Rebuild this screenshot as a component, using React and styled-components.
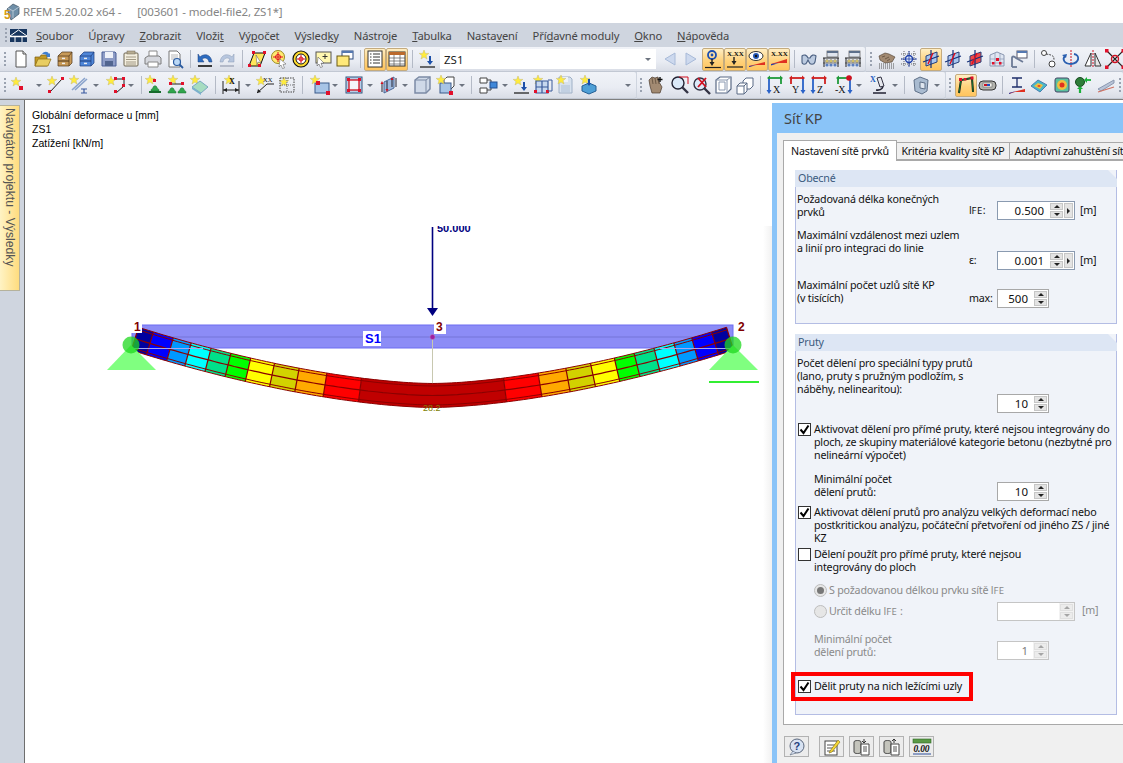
import React from 'react';
import styled, { createGlobalStyle } from 'styled-components';

const Global = createGlobalStyle`
  html, body { margin: 0; padding: 0; background: #fff; }
  body { width: 1123px; height: 763px; overflow: hidden; font-family: "Noto Sans", "Liberation Sans", sans-serif; }
`;

const Window = styled.div`
  width: 1123px;
  height: 763px;
  display: flex;
  flex-direction: column;
  overflow: hidden;
`;

const TitleBar = styled.div`
  height: 23px;
  display: flex;
  align-items: center;
  padding-left: 2px;
  background: #fff;
  color: #858585;
  font-size: 11.5px;
  letter-spacing: -0.15px;
`;

const TitleText = styled.span`
  margin-left: ${p => p.$ml}px;
  white-space: pre;
`;

const MenuBar = styled.div`
  height: 24px;
  display: flex;
  align-items: center;
  background: #cfd5df;
  padding-left: 5px;
  color: #444;
  font-size: 11.2px;
  letter-spacing: -0.15px;
`;

const MenuLogo = styled.div`
  width: 17px;
  height: 13px;
  margin-left: 3px;
  display: flex;
`;

const MenuItem = styled.span`
  margin-left: ${p => p.$ml}px;
  white-space: pre;
`;

const Grip = styled.div`
  flex: none;
  width: 2px;
  height: 16px;
  margin-left: ${p => p.$ml || 0}px;
  background-image: radial-gradient(circle, #9aa2b0 1px, transparent 1px);
  background-size: 2px 4px;
`;

const ToolRow = styled.div`
  height: ${p => p.$h}px;
  display: flex;
  gap: 1px;
  background: #cfd5df;
`;

const ToolGroup = styled.div`
  width: ${p => p.$w}px;
  flex: none;
  display: flex;
  align-items: center;
  background: linear-gradient(#f1f3f8, #e9ecf3 60%, #d9dde6);
  border-bottom: 1px solid #c2c8d3;
  box-sizing: border-box;
  border-radius: 0 2px 2px 0;
`;

const Slot = styled.div`
  flex: none;
  width: ${p => p.$w}px;
  height: ${p => (p.$on ? 23 : 20)}px;
  margin-left: ${p => p.$ml}px;
  display: flex;
  align-items: center;
  justify-content: center;
  box-sizing: border-box;
  ${p => p.$on && `
    border: 1px solid #c4ab7e;
    border-radius: 2px;
    background: linear-gradient(#ffeec4, #ffd27c 55%, #ffc45e);
  `}
`;

const Sep = styled.div`
  flex: none;
  width: 1px;
  height: 18px;
  margin-left: ${p => p.$ml}px;
  background: #b4bac6;
`;

const DropArrow = styled.div`
  flex: none;
  width: 0;
  height: 0;
  margin-left: ${p => p.$ml}px;
  border-left: 3px solid transparent;
  border-right: 3px solid transparent;
  border-top: 3px solid #6d7480;
`;

const Combo = styled.div`
  flex: none;
  width: 216px;
  height: 20px;
  margin-left: ${p => p.$ml}px;
  display: flex;
  align-items: center;
  justify-content: space-between;
  background: #fff;
  padding: 0 5px 0 4px;
  box-sizing: border-box;
  color: #222;
  font-size: 11.5px;
`;

const Main = styled.div`
  flex: 1;
  min-height: 0;
  display: flex;
  border-top: 1px solid #7f7f7f;
`;

const Rail = styled.div`
  width: 24px;
  flex: none;
  background: #cfd5df;
  border-right: 1px solid #6e6e6e;
  padding-top: 5px;
  box-sizing: content-box;
`;

const NavTab = styled.div`
  width: 20px;
  height: 186px;
  box-sizing: border-box;
  border: 1px solid #b5b29c;
  border-left: none;
  background: linear-gradient(90deg, #fff3c4, #ffdc7e);
  color: #555;
  writing-mode: vertical-rl;
  font-family: "Liberation Sans", sans-serif;
  font-size: 12.2px;
  line-height: 18px;
  padding-top: 2px;
  white-space: nowrap;
`;

const Canvas = styled.div`
  position: relative;
  width: 747px;
  flex: none;
  background: #fff;
  padding: 8px 0 0 7px;
  box-sizing: border-box;
  color: #000;
  font-family: "Liberation Sans", sans-serif;
  font-size: 10.5px;
  line-height: 14px;
`;

const Drawing = styled.svg`
  position: absolute;
  left: 0;
  top: 0;
  width: 747px;
  height: 663px;
`;

const Panel = styled.div`
  flex: 1;
  min-width: 0;
  margin-top: 3px;
  display: flex;
  flex-direction: column;
  background: #8ac4f8;
  padding-left: 5px;
`;

const PanelTitle = styled.div`
  height: 30px;
  display: flex;
  align-items: center;
  padding-left: 7px;
  color: #444;
  font-size: 14.5px;
`;

const PanelBody = styled.div`
  flex: 1;
  min-height: 0;
  background: #f0f0f0;
  padding: 7px 0 0 6px;
  display: flex;
  flex-direction: column;
  overflow: hidden;
  font-size: 10.7px;
  letter-spacing: -0.2px;
`;

const Tabs = styled.div`
  display: flex;
  align-items: flex-end;
  height: 20px;
  position: relative;
  z-index: 1;
  color: #111;
`;

const TabItem = styled.div`
  flex: none;
  width: ${p => p.$w}px;
  height: ${p => (p.$on ? 21 : 18)}px;
  margin-bottom: ${p => (p.$on ? -1 : 0)}px;
  box-sizing: border-box;
  display: flex;
  align-items: center;
  justify-content: center;
  white-space: nowrap;
  overflow: hidden;
  background: ${p => (p.$on ? '#fff' : '#f0f0f0')};
  border: 1px solid #a9a9a9;
  border-left-width: ${p => (p.$on ? 1 : 0)}px;
  border-bottom: ${p => (p.$on ? 'none' : '1px solid #a9a9a9')};
`;

const TabPage = styled.div`
  width: 360px;
  height: 565px;
  box-sizing: border-box;
  background: #fff;
  border: 1px solid #a9a9a9;
  padding: 9px 0 0 11px;
  line-height: 13px;
  color: #111;
`;

const Group = styled.section`
  width: 322px;
  height: ${p => p.$h}px;
  box-sizing: border-box;
  margin-bottom: 10px;
  background: #f0f3f9;
  border: 1px solid #b4bde4;
  border-top: none;
`;

const GroupHead = styled.div`
  height: 17px;
  margin: 0 -1px;
  padding-left: 3px;
  display: flex;
  align-items: center;
  background: #dde6f4;
  color: #3b5a7d;
  clip-path: polygon(0 0, calc(100% - 9px) 0, 100% 9px, 100% 100%, 0 100%);
`;

const GroupBody = styled.div`
  padding: ${p => p.$pt}px 0 0 1px;
  display: flex;
  flex-direction: column;
`;

const FieldRow = styled.div`
  display: grid;
  grid-template-columns: 172px 28px auto auto;
  justify-content: start;
  align-items: end;
  height: ${p => p.$h}px;
  margin-top: ${p => p.$mt || 0}px;
  color: ${p => (p.$off ? '#8a8a8a' : 'inherit')};
`;

const Label = styled.div`
  padding-left: ${p => p.$pl || 0}px;
  align-self: start;
  white-space: nowrap;
`;

const Symbol = styled.span`
  align-self: end;
  padding-bottom: 3px;
`;

const Small = styled.span`
  font-size: 9.5px;
  letter-spacing: 0.5px;
`;

const Field = styled.div`
  width: ${p => p.$w}px;
  height: 19px;
  box-sizing: border-box;
  display: flex;
  align-items: stretch;
  background: #fff;
  border: 1px solid ${p => (p.$off ? '#c5c5c5' : '#a8a8a8')};
  ${p => p.$accent && 'border-color: #8a9ab0;'}
  color: ${p => (p.$off ? '#7d7d7d' : '#111')};
`;

const FieldValue = styled.div`
  flex: 1;
  text-align: right;
  line-height: 18px;
  padding-right: 5px;
  font-size: 11.5px;
  letter-spacing: 0;
`;

const SpinCol = styled.div`
  width: 13px;
  display: flex;
  flex-direction: column;
  gap: 1px;
  padding: 1px;
  background: ${p => (p.$off ? '#f2f2f2' : '#fff')};
`;

const SpinBtn = styled.div`
  flex: 1;
  display: flex;
  align-items: center;
  justify-content: center;
  background: ${p => (p.$off ? '#ececec' : '#e3e3e3')};
  box-shadow: inset 0 0 0 1px ${p => (p.$off ? '#e0e0e0' : '#c6c6c6')};
  &::after {
    content: '';
    border-left: 3px solid transparent;
    border-right: 3px solid transparent;
    ${p => (p.$down ? 'border-top' : 'border-bottom')}: 3px solid ${p => (p.$off ? '#a5a5a5' : '#222')};
  }
`;

const NextBtn = styled.div`
  width: 9px;
  margin: 1px 1px 1px 0;
  display: flex;
  align-items: center;
  justify-content: center;
  background: #e3e3e3;
  box-shadow: inset 0 0 0 1px #c6c6c6;
  &::after {
    content: '';
    border-top: 3px solid transparent;
    border-bottom: 3px solid transparent;
    border-left: 3px solid #222;
  }
`;

const Unit = styled.span`
  padding: 0 0 3px 5px;
`;

const CheckRow = styled.div`
  display: flex;
  gap: 3px;
  margin-top: ${p => p.$mt || 0}px;
  padding-left: 1px;
  position: relative;
  white-space: nowrap;
  ${p => p.$flag && `
    &::after {
      content: '';
      position: absolute;
      left: -6px;
      top: -8px;
      width: 182px;
      height: 29px;
      box-sizing: border-box;
      border: 4px solid #ff0000;
    }
  `}
`;

const Box = styled.div`
  flex: none;
  width: 13px;
  height: 13px;
  box-sizing: border-box;
  background: #fff;
  border: 1px solid #333;
  display: flex;
  align-items: center;
  justify-content: center;
`;

const RadioRow = styled.div`
  display: flex;
  align-items: center;
  gap: 2px;
  height: ${p => p.$h}px;
  padding-left: 17px;
  margin-top: ${p => p.$mt || 0}px;
  color: #8a8a8a;
`;

const Radio = styled.div`
  width: 13px;
  height: 13px;
  flex: none;
  box-sizing: border-box;
  border-radius: 50%;
  border: 1px solid #bdbdbd;
  background: #e6e6e6;
  display: flex;
  align-items: center;
  justify-content: center;
  &::after {
    content: '';
    display: ${p => (p.$on ? 'block' : 'none')};
    width: 7px;
    height: 7px;
    border-radius: 50%;
    background: #777;
  }
`;

const RadioText = styled.span`
  flex: none;
  width: 166px;
  white-space: nowrap;
`;

const Buttons = styled.div`
  flex: 1;
  display: flex;
  align-items: flex-start;
  padding: 11px 0 0 1px;
  gap: 5px;
`;

const DialogBtn = styled.div`
  width: 25px;
  height: 21px;
  box-sizing: border-box;
  margin-right: ${p => p.$mr || 0}px;
  border: 1px solid #b2b2b2;
  background: #ececec;
  display: flex;
  align-items: center;
  justify-content: center;
`;

const Star = ({ x = 6, y = 6 }) => (
  <polygon
    transform={`translate(${x} ${y})`}
    points="0,-5 1.3,-1.6 4.8,-1.6 2,.6 3,4 0,2 -3,4 -2,.6 -4.8,-1.6 -1.3,-1.6"
    fill="#ffec3d"
    stroke="#c8bb66"
    strokeWidth=".5"
  />
);
const Dot = ({ x, y, s = 4 }) => <rect x={x} y={y} width={s} height={s} fill="#e1102b" />;
const Txt = ({ x, y, s = 6.5, c = '#111', b = 700, children }) => (
  <text x={x} y={y} fontSize={s} fill={c} fontWeight={b} fontFamily="Liberation Serif, serif">
    {children}
  </text>
);
const Dome = ({ x, y }) => (
  <path transform={`translate(${x} ${y})`} d="M-4 4c0-2 1-2.500 2-3 0-3 4-3 4 0 1 .5 2 1 2 3z" fill="#2fa54c" stroke="#176b2c" strokeWidth=".5" />
);
const Cabinet = ({ c, d }) => (
  <g>
    <path d="M3 7 7 3h10v11l-3 3H3z" fill={c} stroke={d} strokeWidth=".7" />
    <path d="M3 7h11v10M14 7l3-4" fill="none" stroke={d} strokeWidth=".7" />
    <path d="M3 12h11" stroke={d} />
    <rect x="7" y="8.7" width="3" height="1.4" fill="#eee" />
    <rect x="7" y="13.7" width="3" height="1.4" fill="#eee" />
  </g>
);
const Rack = () => (
  <g>
    <rect x="6" y="2" width="11" height="6" fill="#dfe5ee" stroke="#555" strokeWidth=".7" />
    <rect x="6" y="2" width="11" height="2" fill="#5c6f8a" />
    <path d="M2 9h16M3 9v9M17 9v9" stroke="#222" fill="none" />
    <path d="M2 14h16" stroke="#222" strokeWidth=".6" />
    <g fill="#d6c66a" stroke="#666" strokeWidth=".4">
      <circle cx="6" cy="12" r="1.6" /><circle cx="10" cy="12" r="1.6" /><circle cx="14" cy="12" r="1.6" />
    </g>
    <g fill="#5a7fc0">
      <circle cx="6" cy="16" r="1.6" /><circle cx="10" cy="16" r="1.6" /><circle cx="14" cy="16" r="1.6" />
    </g>
  </g>
);
const Plane = ({ red }) => (
  <g>
    <path d="M5 7 16 3v10L5 17z" fill={red ? '#f04848' : '#a9c5ee'} stroke="#27407a" />
    <path d="M2 13 18 7M10 1v18" stroke="#14307a" strokeWidth="1.200" />
    <path d="M7 15l5-11" stroke="#e01020" strokeWidth="1.400" />
  </g>
);
// top arrow in the axis colour, the blue down arrow beside the axis letter
const Axis = ({ c, l, side = 'left' }) => {
  const ax = side === 'left' ? 4 : 16;
  const tx = side === 'left' ? 8 : l.length > 1 ? 1 : 5;
  return (
    <g>
      <path d="M4 3h12" stroke={c} strokeWidth="1.800" />
      <path d="M2 3l3-2.500v5zM18 3l-3-2.500v5z" fill={c} />
      <path d={`M${ax} 4v12`} stroke="#2a62c8" strokeWidth="1.800" />
      <path d={`M${ax - 2.500} 15l2.500 4 2.500-4z`} fill="#2a62c8" />
      <path d={`M${20 - ax} 4v5`} stroke={c} strokeWidth="1.800" />
      <Txt x={tx} y="18" s={10} b={400}>{l}</Txt>
    </g>
  );
};
const Load = ({ eye, xx }) => (
  <g>
    {eye && (
      <g>
        <ellipse cx="9" cy="7" rx="7" ry="4.500" fill="#fff" stroke="#333" />
        <circle cx="9" cy="7" r="3" fill="#2457b5" />
        <circle cx="9" cy="7" r="1.200" fill="#111" />
      </g>
    )}
    {xx && <Txt x="2" y="7" s={7}>X.XX</Txt>}
    {!eye && !xx && (
      <g>
        <circle cx="9" cy="6" r="4" fill="none" stroke="#1e4fb0" strokeWidth="1.800" />
        <circle cx="9" cy="6" r="1.400" fill="#1e4fb0" />
      </g>
    )}
  </g>
);

const ICONS = {
  new: <g><path d="M5 2h7l3 3v13H5z" fill="#fff" stroke="#555" /><path d="M12 2v3h3" fill="#e6e6e6" stroke="#555" /></g>,
  open: <g><path d="M2 8h5l1-2h6v11H2z" fill="#c29a24" stroke="#7a5a10" strokeWidth=".7" /><path d="M2 17l3-7h13l-3 7z" fill="#e8cd62" stroke="#8a6a14" strokeWidth=".7" /><path d="M9 5c2-3 6-3 7 0l1-1v4h-4l1-1c-1-2-3-2-5-2z" fill="#3f7fd0" /></g>,
  cab: <Cabinet c="#c89a58" d="#4d3518" />,
  cabB: <Cabinet c="#4f86d8" d="#1b3a78" />,
  save: <g><path d="M3 3h13l1 1v13H3z" fill="#8d9cc6" stroke="#4b5f96" /><rect x="6" y="3" width="8" height="6" fill="#eef1f8" /><rect x="6" y="12" width="8" height="5" fill="#52658f" /></g>,
  clip: <g><rect x="3" y="4" width="14" height="13" rx="1" fill="#f4efdf" stroke="#6d6450" /><rect x="6" y="2" width="8" height="3" fill="#b8ad92" stroke="#6d6450" strokeWidth=".5" /><path d="M5 8h10M5 10.500h10M5 13h10M5 15h10" stroke="#8d836c" strokeWidth=".8" /></g>,
  print: <g><path d="M6 2h8v6H6z" fill="#fff" stroke="#8a8a8a" /><path d="M2 9l3-2h11l2 2v6H2z" fill="#d6d8de" stroke="#7c7c7c" /><path d="M5 13h10v5H5z" fill="#fff" stroke="#8a8a8a" /></g>,
  preview: <g><path d="M4 2h8l3 3v13H4z" fill="#fff" stroke="#777" /><path d="M6 6h7M6 8h7M6 10h4" stroke="#999" strokeWidth=".7" /><circle cx="12" cy="13" r="3.500" fill="#bcd9f6" stroke="#2c5ca0" strokeWidth="1.200" /><path d="M14.500 15.500 18 19" stroke="#2c5ca0" strokeWidth="1.800" /></g>,
  undo: <g><path d="M3 17h14" stroke="#111" strokeWidth="1.600" /><path d="M5 8c4-4 11-3 12 5h-3c-1-4-4-5-7-3l2 3H3V5z" fill="#2d6cc0" stroke="#1a3f7d" strokeWidth=".5" /></g>,
  redo: <g><path d="M3 17h14" stroke="#a9b0c0" strokeWidth="1.600" /><path d="M15 8C11 4 4 5 3 13h3c1-4 4-5 7-3l-2 3h6V5z" fill="#b7c6de" stroke="#8b9ab5" strokeWidth=".5" /></g>,
  para: <g><path d="M7 4h11l-5 13H2z" fill="#ffe65c" stroke="#111" /><Dot x="5" y="2" s={3} /><Dot x="16" y="2" s={3} /><Dot x="1" y="15" s={3} /><Dot x="11" y="15" s={3} /><path d="M9 6l5 8-3-1-1 3z" fill="#fff" stroke="#555" strokeWidth=".5" /></g>,
  target: <g><circle cx="9" cy="8" r="6.500" fill="#ffe970" stroke="#9a8a20" /><path d="M9 3v10M4 8h10" stroke="#e01020" /><circle cx="9" cy="8" r="2.500" fill="none" stroke="#e01020" /><path d="M11 10l6 5-3 .5 1.500 3.500-2 .5-1.500-3.500-2 2z" fill="#fff" stroke="#555" strokeWidth=".5" /></g>,
  targetY: <g><circle cx="10" cy="10" r="8" fill="#ffdc2e" stroke="#111" strokeWidth="1.200" /><circle cx="10" cy="10" r="5" fill="#fff" stroke="#111" /><path d="M10 6v8M6 10h8" stroke="#e01020" /><circle cx="10" cy="10" r="2" fill="none" stroke="#e01020" /></g>,
  note: <g><rect x="3" y="3" width="15" height="11" fill="#fff7b0" stroke="#555" /><path d="M12 5v5M9.500 7.500h5" stroke="#333" /><path d="M5 8l6 6-3 .3 1.500 3.500-2 .7-1.500-3.500-2 2z" fill="#fff" stroke="#444" strokeWidth=".5" /></g>,
  win: <g><rect x="7" y="2" width="11" height="8" fill="#fff" stroke="#2a4a80" /><rect x="7" y="2" width="11" height="2" fill="#5578b0" /><rect x="2" y="7" width="12" height="10" fill="#ffe97a" stroke="#6a5a14" /></g>,
  list: <g><rect x="3" y="2" width="14" height="16" fill="#fff" stroke="#333" /><path d="M8 5h7M8 8h7M8 11h7M8 14h7M5 5h1.500M5 8h1.500M5 11h1.500M5 14h1.500" stroke="#333" /></g>,
  table: <g><rect x="2" y="3" width="16" height="14" fill="#fff" stroke="#333" /><rect x="2" y="3" width="16" height="3" fill="#bb6a2c" /><path d="M2 9h16M2 12h16M2 15h16M7 6v11M13 6v11" stroke="#555" strokeWidth=".7" /></g>,
  starDown: <g><Star x={7} y={6} /><path d="M13 7v7" stroke="#1c4fa8" strokeWidth="2" /><path d="M10 12l3 4 3-4z" fill="#1c4fa8" /><path d="M3 18h15" stroke="#222" strokeWidth="1.300" /></g>,
  arrL: <path d="M15 4v12L5 10z" fill="#cdd9ee" stroke="#a8bad8" />,
  arrR: <path d="M5 4v12l10-6z" fill="#cdd9ee" stroke="#a8bad8" />,
  loadP: <g><Load /><path d="M9 10v5" stroke="#222" strokeWidth="1.400" /><path d="M6.500 13 9 17l2.500-4z" fill="#222" /><path d="M2 18.500h16" stroke="#222" strokeWidth="1.200" /></g>,
  loadX: <g><Load xx /><path d="M9 8v6" stroke="#222" strokeWidth="1.400" /><path d="M6.500 12 9 16l2.500-4z" fill="#222" /><path d="M2 18h16" stroke="#222" strokeWidth="1.200" /></g>,
  loadE: <g><Load eye /><path d="M2 17 18 13v3H8l-6 2z" fill="#e03020" /><path d="M2 17l8-1-8 2z" fill="#1f3fb0" /></g>,
  loadR: <g><Load xx /><path d="M2 15 18 10v4H8l-6 2z" fill="#e03020" /><path d="M2 15l8-1-8 2.500z" fill="#1f3fb0" /></g>,
  glasses: <path d="M3 7c2-2 5-1 6 2l2 0c1-3 4-4 6-2l-1 6c-1 3-5 3-6 0l-1-2-1 2c-1 3-5 3-5 0z" fill="#bccbe0" stroke="#4a5f80" strokeWidth="1.100" />,
  rack: <Rack />,
  hands: <g><path d="M2 7l6-3 4 1 6 3-3 5-7 1-5-3z" fill="#a28a72" stroke="#4a3a2c" strokeWidth=".6" /><path d="M5 8l3-1M8 10l4-2M10 12l3-2" stroke="#4a3a2c" strokeWidth=".6" /><path d="M2 15h16M2 17h16M2 19h16" stroke="#555" strokeDasharray="1 1" /></g>,
  gridT: <g><path d="M2 5h16M2 10h16M2 15h16M5 2v16M10 2v16M15 2v16" stroke="#444" strokeDasharray="1 1" strokeWidth=".8" /><circle cx="10" cy="10" r="3.500" fill="#dde8fa" stroke="#1e3fa8" strokeWidth="1.400" /><path d="M10 2v16M2 10h16" stroke="#1e3fa8" strokeWidth=".8" /></g>,
  plane: <Plane />,
  planeR: <Plane red />,
  gridR: <g><path d="M3 6 10 3l7 3v11H3z" fill="#dfe6f2" stroke="#8a97b0" /><path d="M3 10h14M3 14h14M8 4v13M13 4v13" stroke="#8a97b0" strokeWidth=".7" /><Dot x="9" y="9" s={3} /><Dot x="5" y="13" s={2.500} /><Dot x="12" y="13" s={2.500} /></g>,
  branch: <g><rect x="8" y="2" width="10" height="7" fill="#fff" stroke="#556" /><rect x="8" y="2" width="10" height="2" fill="#5578b0" /><path d="M3 18V9c0-2 2-2 4 0l7 4" fill="none" stroke="#6c7a96" strokeWidth="1.800" /><path d="M3 18h5" stroke="#6c7a96" strokeWidth="1.800" /></g>,
  nodes: <g><circle cx="5" cy="4" r="2.500" fill="#fff" stroke="#444" /><circle cx="13" cy="15" r="3" fill="#fff" stroke="#444" /><path d="M7 5c8 1 8 3 8 6" fill="none" stroke="#444" strokeDasharray="2 1" /></g>,
  rotate: <g><path d="M10 1v18" stroke="#d01020" strokeDasharray="2 1" /><path d="M13 5c6 1 6 9-3 10-7 0-9-5-6-8" fill="none" stroke="#2a5fb0" strokeWidth="1.800" /><path d="M1 6l5-1-1 4z" fill="#2a5fb0" /></g>,
  mirror: <g><path d="M8 4v13H2z" fill="#fff" stroke="#333" /><path d="M12 4v13h6z" fill="#e6e6e6" stroke="#333" /><path d="M10 1v18" stroke="#d01020" strokeDasharray="2 1" /></g>,
  xRed: <g><path d="M2 2l16 16M18 2 2 18" stroke="#222" strokeWidth="1.200" /><circle cx="10" cy="10" r="3.500" fill="none" stroke="#d01020" strokeWidth="1.400" /><Dot x="0" y="0" s={3.500} /><Dot x="16.500" y="0" s={3.500} /><Dot x="0" y="16.500" s={3.500} /><Dot x="16.500" y="16.500" s={3.500} /></g>,
  star: <g><Star x={6} y={7} /><Dot x={9} y={11} s={4} /></g>,
  line: <g><Star x={6} y={6} /><path d="M4 17 16 4" stroke="#222" /><Dot x={2} y={15} s={3} /><Dot x={15} y={2} s={3} /></g>,
  beamI: <g><Star x={5} y={5} /><path d="M3 15 16 3M6 15 18 4" stroke="#8aa3cc" strokeWidth="1.600" /><path d="M12 14h6M15 14v4M12 18h6" stroke="#3a5aa0" strokeWidth="1.200" /></g>,
  poly: <g><Star x={5} y={6} /><path d="M9 4h9v7l-8 7" fill="none" stroke="#222" /><Dot x={8} y={2} s={3} /><Dot x={16} y={2} s={3} /><Dot x={16} y={9} s={3} /><Dot x={8} y={15} s={3} /></g>,
  support: <g><Star x={6} y={5} /><Dot x={9} y={4} s={3} /><Dome x={11} y={12} /><path d="M5 17h12" stroke="#176b2c" strokeWidth="2" /></g>,
  supports: <g><Star x={6} y={5} /><path d="M5 9h10" stroke="#222" /><Dot x={2} y={7} s={3} /><Dot x={14} y={7} s={3} /><Dome x={5} y={14} /><Dome x={15} y={14} /></g>,
  surfG: <g><Star x={5} y={5} /><path d="M2 12l8-6 8 6-7 6z" fill="#a6dcc0" stroke="#7aa8c0" /><path d="M2 12v2l9 6v-2z" fill="#7ab0cc" /></g>,
  dim: <g><path d="M2 6v13M18 6v13M2 15h16" stroke="#222" /><path d="M2 15l4-2v4zM18 15l-4-2v4z" fill="#222" /><Star x={8} y={5} /><Txt x="8" y="9" s={8}>X</Txt></g>,
  xx: <g><Star x={6} y={6} /><Txt x="8" y="7" s={6.500} b={400}>XX</Txt><path d="M2 18 12 9h7" fill="none" stroke="#222" /><path d="M2 18l1-4 3 3z" fill="#222" /></g>,
  dots: <g><Star x={7} y={7} /><path d="M3 3h14v14H3z" fill="none" stroke="#444" strokeDasharray="1.500 1" /><path d="M3 10h14M10 3v14" stroke="#444" strokeDasharray="1 1" strokeWidth=".7" /></g>,
  surf: <g><rect x="5" y="8" width="14" height="10" fill="#a7c4e6" stroke="#3a5a8a" /><Star x={5} y={5} /><Dot x={6} y={6} /><Dot x={16} y={16} /></g>,
  rectR: <g><rect x="2" y="2" width="16" height="16" fill="#b9cfe8" stroke="#33557f" /><rect x="5" y="5" width="10" height="10" fill="#f4f6fb" stroke="#d01020" strokeWidth="1.300" /><Dot x={3} y={3} s={3} /><Dot x={14} y={3} s={3} /><Dot x={3} y={14} s={3} /><Dot x={14} y={14} s={3} /></g>,
  wall: <g><path d="M5 7l10-5v11L5 18z" fill="#9fb9dc" stroke="#4a6a9a" /><path d="M3 8v9M8 6v9M13 3v9M17 3v9" stroke="#223" /><path d="M1.500 9 3 6l1.500 3zM11.500 5 13 2l1.500 3zM6.500 14 8 17l1.500-3z" fill="#d01020" /></g>,
  cube: <g><path d="M3 5l4-3h11v12l-4 4H3z" fill="#cfd9e8" stroke="#7c8ba5" strokeWidth="1.500" /><path d="M3 5h11v13M14 5l4-3" fill="none" stroke="#7c8ba5" /></g>,
  cubeS: <g><path d="M8 5l3-3h7v9l-3 3H8z" fill="#fff" stroke="#444" /><rect x="4" y="8" width="11" height="10" fill="#a7c4e6" stroke="#3a5a8a" /><Star x={5} y={5} /><Dot x={13} y={16} /></g>,
  flow: <g><path d="M2 3h7v5H2zM2 13h7v5H2z" fill="#fff" stroke="#444" /><path d="M9 5h4v10H9" fill="none" stroke="#444" /><rect x="12" y="7" width="7" height="6" fill="#3f87d8" stroke="#224f90" /></g>,
  netS: <g><Star x={5} y={5} /><path d="M3 6h12v12H3zM3 12h12M9 6v12" fill="#c7d8ef" stroke="#3a5a9a" strokeWidth="1.200" /><Dot x={1} y={15} s={3} /><Dot x={13} y={15} s={3} /><path d="M15 5h4v11h-4" fill="none" stroke="#3a5a9a" /></g>,
  netF: <g><path d="M4 2h11l2 2v14H4z" fill="#d7e1ee" stroke="#9fb0c6" /><rect x="6" y="2" width="7" height="5" fill="#eef2f8" /><rect x="6" y="10" width="9" height="7" fill="#c2d0e2" /><Star x={6} y={5} /></g>,
  boxS: <g><Star x={6} y={5} /><path d="M3 11l7-3 7 3v5l-7 3-7-3z" fill="#4e9fd6" stroke="#245f95" /><path d="M10 4v6" stroke="#1c4fa8" strokeWidth="2" /><path d="M8 8l2 3 2-3z" fill="#1c4fa8" /></g>,
  handC: <g><path d="M3 5l3-3 3 1 3-1 1 5 3 5-2 6H6l-2-7z" fill="#a28a72" stroke="#4a3a2c" strokeWidth=".7" /><path d="M6 3l1 6M9 3l1 6M12 3l1 6" stroke="#4a3a2c" strokeWidth=".6" /><path d="M14 2v5M11.500 4.500h5" stroke="#111" strokeWidth="1.400" /></g>,
  zoomW: <g><circle cx="8" cy="8" r="6" fill="#dbe9f8" stroke="#223" strokeWidth="1.400" /><path d="M12 12l6 6" stroke="#334" strokeWidth="2.400" /><path d="M9 2h9v7" fill="none" stroke="#d01020" /></g>,
  zoomX: <g><circle cx="8" cy="9" r="6" fill="#dbe9f8" stroke="#334" strokeWidth="1.400" /><path d="M12 13l6 6" stroke="#334" strokeWidth="2.400" /><path d="M6 3l8 9M14 3 6 12" stroke="#d01020" strokeWidth="1.800" /></g>,
  cubeW: <g><path d="M3 5l4-3h11v12l-4 4H3z" fill="#fff" stroke="#5a6a85" strokeWidth="1.200" /><path d="M3 5h11v13M14 5l4-3M6 7h6v8H6z" fill="none" stroke="#8a98b0" /></g>,
  cubes: <g><path d="M8 6l3-3h7v8l-3 3H8z" fill="#fff" stroke="#5a6a85" /><path d="M2 11l3-3h7v8l-3 3H2z" fill="#fff" stroke="#5a6a85" /><path d="M2 11h7v8M9 11l3-3" fill="none" stroke="#5a6a85" /></g>,
  axX: <Axis c="#1f9a3a" l="X" />,
  axY: <Axis c="#d02020" l="Y" side="right" />,
  axZ: <Axis c="#d02020" l="Z" />,
  axM: <g><Axis c="#1f9a3a" l="-X" side="right" /><circle cx="15" cy="3" r="2.800" fill="#d01020" /></g>,
  micro: <g><path d="M4 18h13M7 15c6 1 8-3 6-7" fill="none" stroke="#223" strokeWidth="1.600" /><path d="M8 3l4-1 3 9-4 1z" fill="#e6e8ee" stroke="#334" /><Txt x="1" y="7" s={8} c="#1f5fc0">X</Txt></g>,
  solid: <g><path d="M3 5l6-3 8 3-1 11-5 3-7-3z" fill="#a9bbd0" stroke="#5f7088" /><path d="M9 7l5 1v6l-5-1z" fill="#dfe6ef" stroke="#5f7088" /></g>,
  frame: <g><path d="M3 18 5 5l11-2 1 14" fill="none" stroke="#111" strokeWidth="2" /><path d="M3 18 5 5l11-2 1 14" fill="none" stroke="#1f8a3a" strokeWidth=".8" /><Dot x={3} y={3} s={3} /><Dot x={14.500} y={1.500} s={3} /><Dot x={8} y={3} s={2.500} /></g>,
  pill: <g><rect x="2" y="6" width="17" height="9" rx="4" fill="#b4b4ae" stroke="#333" /><rect x="6" y="8" width="9" height="4" fill="#f4f4ee" stroke="#555" strokeWidth=".5" /><rect x="7" y="9" width="3" height="2" fill="#d01020" /><rect x="10" y="9" width="3" height="2" fill="#2050c0" /></g>,
  ibar: <g><path d="M5 3h10M10 3v9M5 12h10" stroke="#1c2c6a" strokeWidth="1.300" /><path d="M2 18 18 14v3H8l-6 2z" fill="#e03020" /><path d="M2 18l7-2-7 3z" fill="#1f3fb0" /></g>,
  rainbow: <g><path d="M2 11 9 5l9 5-7 7z" fill="#48b8c8" stroke="#4a7fb0" /><path d="M5 11l4-3 5 2-3 4z" fill="#f0c040" /><path d="M8 11l2-1 2 1-2 1z" fill="#e03020" /></g>,
  rainCube: <g><rect x="3" y="3" width="14" height="14" rx="2" fill="#5cc0a0" stroke="#446" /><circle cx="10" cy="10" r="5" fill="#f0c040" /><circle cx="10" cy="10" r="2.500" fill="#e03020" /></g>,
  greenA: <g><circle cx="8" cy="7" r="4.500" fill="#2e7d3a" stroke="#174a20" /><path d="M8 12v6" stroke="#1bb03a" strokeWidth="2.200" /><path d="M5 14l3-3 3 3z" fill="#1bb03a" /><path d="M14 5h5" stroke="#1bb03a" strokeWidth="1.800" /><path d="M15 2l-3 3 3 3z" fill="#1bb03a" /></g>,
  slope: <g><path d="M2 14 18 5v3L5 16z" fill="#b9c4d8" stroke="#8a98b0" /><path d="M2 17 18 12" stroke="#d07060" strokeWidth="1.300" /></g>,
};

const Icon = ({ k }) => (
  <svg width="20" height="20" viewBox="0 0 20 20">{ICONS[k]}</svg>
);

// every entry is [kind, centre x]; only the gap before it is derived from that
const layItems = (items, start) => {
  let right = start;
  return items.map(([k, c]) => {
    const w = k === '|' ? 1 : k === 'v' ? 6 : k === '=' ? 2 : k === 'combo' ? 216 : 22;
    const ml = Math.round(c - w / 2 - right);
    right = right + ml + w;
    return { k, c, w, ml };
  });
};

const Items = ({ items, start }) =>
  layItems(items, start).map(({ k, c, w, ml }) => {
    if (k === '|') return <Sep key={c} $ml={ml} />;
    if (k === 'v') return <DropArrow key={c} $ml={ml} />;
    if (k === '=') return <Grip key={c} $ml={ml} />;
    if (k === 'combo')
      return (
        <Combo key={c} $ml={ml}>
          ZS1
          <DropArrow $ml={0} />
        </Combo>
      );
    const on = k.endsWith('!');
    return (
      <Slot key={c} $w={w} $ml={ml} $on={on}>
        <Icon k={on ? k.slice(0, -1) : k} />
      </Slot>
    );
  });

const ROW1A = [['=', 5], ['new', 21], ['open', 43], ['cab', 65], ['cabB', 87], ['save', 109], ['clip', 131], ['print', 153], ['preview', 175], ['|', 190], ['undo', 205], ['redo', 227], ['|', 242], ['para', 257], ['target', 279], ['targetY', 301], ['note', 323], ['win', 345], ['|', 360], ['list!', 375], ['table!', 397], ['|', 412], ['starDown', 427], ['combo', 548], ['arrL', 670], ['arrR', 691], ['loadP!', 713], ['loadX!', 735], ['loadE!', 757], ['loadR!', 779], ['|', 794], ['glasses', 809], ['rack', 831], ['rack', 853]];
const ROW1B = [['=', 871], ['hands', 887], ['gridT', 909], ['plane!', 931], ['plane', 953], ['planeR', 975], ['gridR', 997], ['branch', 1019], ['|', 1034], ['nodes', 1049], ['rotate', 1071], ['mirror', 1093], ['xRed', 1115]];
const ROW2A = [['=', 5], ['star', 20], ['v', 39], ['line', 56], ['beamI', 79], ['v', 96], ['poly', 116], ['v', 131], ['|', 141], ['support', 154], ['supports', 177], ['surfG', 200], ['|', 215], ['dim', 231], ['v', 248], ['xx', 265], ['dots', 287], ['|', 302], ['surf', 320], ['v', 335], ['rectR', 354], ['v', 370], ['wall', 389], ['v', 405], ['cube', 422], ['cubeS', 446], ['v', 462], ['|', 471], ['flow', 488], ['v', 505], ['starDown', 521], ['netS', 543], ['netF', 565], ['boxS', 589], ['v', 628]];
const ROW2B = [['=', 641], ['handC', 656], ['zoomW', 680], ['zoomX', 702], ['cubeW', 723], ['cubes', 745], ['|', 760], ['axX', 775], ['axY', 797], ['axZ', 819], ['axM', 844], ['v', 859], ['micro', 879], ['v', 895], ['|', 904], ['solid', 921], ['v', 937]];
const ROW2C = [['=', 950], ['frame!', 966], ['pill', 987], ['|', 1002], ['ibar', 1017], ['rainbow', 1039], ['rainCube', 1062], ['greenA', 1082], ['slope', 1106], ['=', 1120]];

const MENU = [
  ['', 'S', 'oubor', 9], ['Úp', 'r', 'avy', 15], ['', 'Z', 'obrazit', 15], ['Vloži', 't', '', 15], ['Vý', 'p', 'očet', 15],
  ['Výsled', 'k', 'y', 15], ['Nástro', 'j', 'e', 15], ['', 'T', 'abulka', 15], ['Nasta', 'v', 'ení', 15],
  ['Pří', 'd', 'avné moduly', 15], ['', 'O', 'kno', 15], ['', 'N', 'ápověda', 15],
];

const Spin = ({ off }) => (
  <SpinCol $off={off}>
    <SpinBtn $off={off} />
    <SpinBtn $off={off} $down />
  </SpinCol>
);

const NumField = ({ value, w = 52, next, off }) => (
  <Field $w={w} $off={off} $accent={next}>
    <FieldValue>{value}</FieldValue>
    <Spin off={off} />
    {next && <NextBtn />}
  </Field>
);

const Tick = () => (
  <svg width="11" height="11" viewBox="0 0 11 11">
    <path d="M1.500 5.500 4.500 9 9.500 1.500" fill="none" stroke="#000" strokeWidth="2" />
  </svg>
);

const Check = ({ on, children, mt, flag }) => (
  <CheckRow $mt={mt} $flag={flag}>
    <Box>{on && <Tick />}</Box>
    <div>{children}</div>
  </CheckRow>
);

// centre line of the deformed beam, in page coordinates
const sag = x => 395.5 - 57.5 * Math.pow(Math.abs(432.5 - x) / 300, 1.65);
const at = (x, off) => {
  const s = sag(x + 0.5) - sag(x - 0.5);
  const n = Math.hypot(1, s);
  return [x - (s * off) / n, sag(x) + off / n];
};
const edge = (a, b, off, steps = 8) => {
  const pts = [];
  for (let i = 0; i <= steps; i++) pts.push(at(a + ((b - a) * i) / steps, off));
  return pts;
};
const pathOf = pts => pts.map(p => p.map(v => v.toFixed(1)).join(',')).join(' ');

const CELLS = [
  [135, 150, '#00009f'], [150, 170, '#0000ff'], [170, 188, '#0099ff'], [188, 208, '#00ffff'],
  [208, 228, '#00e08a'], [228, 248, '#00ff00'], [248, 272, '#ffff00'], [272, 297, '#d2d200'],
  [297, 325, '#ffaa00'], [325, 360, '#ff0000'], [360, 505, '#c00000'], [505, 540, '#ff0000'],
  [540, 568, '#ffaa00'], [568, 593, '#d2d200'], [593, 617, '#ffff00'], [617, 637, '#00ff00'],
  [637, 657, '#00e08a'], [657, 677, '#00ffff'], [677, 695, '#0099ff'], [695, 715, '#0000ff'],
  [715, 730, '#00009f'],
];

const Beam = () => (
  <Drawing viewBox="25 100 747 663">
    <defs>
      <linearGradient id="edgeShade" x1="0" x2="1" y1="0" y2="0">
        <stop offset="0" stopColor="#fff" />
        <stop offset="1" stopColor="#f1f1f1" />
      </linearGradient>
      <clipPath id="loadClip"><rect x="430" y="226" width="60" height="6" /></clipPath>
    </defs>
    <rect x="763" y="226" width="9" height="537" fill="url(#edgeShade)" />
    <rect x="132" y="325" width="601" height="23" fill="#8c8cf6" stroke="#6c6cf2" />
    <path d="M132 337h601" stroke="#7474d8" />
    {CELLS.map(([a, b, c]) => (
      <polygon key={a} points={pathOf([...edge(a, b, -12), ...edge(a, b, 12).reverse()])} fill={c} />
    ))}
    {[-12, -9.5, 0, 9.5, 12].map(o => (
      <polyline key={o} points={pathOf(edge(135, 730, o, 120))} fill="none" stroke="#8b0000" strokeWidth={o === 0 ? 1.2 : 1} />
    ))}
    {CELLS.map(([a]) => (
      <polyline key={a} points={pathOf([at(a, -12), at(a, 12)])} stroke="#8b0000" strokeWidth="1.2" />
    ))}
    <polyline points={pathOf([at(730, -12), at(730, 12)])} stroke="#8b0000" strokeWidth="1.2" />
    <path d="M131 348.500h72M660 348.500h72" stroke="#a6a6f0" />
    <polygon points="131,345 107,370 156,370" fill="#80ff80" />
    <circle cx="131" cy="345" r="8.500" fill="#1fd81f" fillOpacity=".75" />
    <polygon points="733,345 709,370 758,370" fill="#80ff80" />
    <circle cx="733" cy="345" r="8.500" fill="#1fd81f" fillOpacity=".75" />
    <path d="M709 382h50" stroke="#33ee33" strokeWidth="2" />
    <path d="M432.500 337v46" stroke="#c8c8b0" />
    <circle cx="432.500" cy="337" r="2.500" fill="#a020a0" stroke="#c080c0" strokeWidth=".5" />
    <path d="M432.500 227v82" stroke="#000080" strokeWidth="1.600" />
    <polygon points="427,308 438,308 432.500,316" fill="#000080" />
    <g clipPath="url(#loadClip)">
      <text x="437" y="232" fontSize="11" fontWeight="700" fill="#000080" fontFamily="Liberation Sans, sans-serif">50.000</text>
    </g>
    <rect x="131" y="322" width="11" height="11" fill="#fff" />
    <text x="134" y="331" fontSize="12" fontWeight="700" fill="#800000" fontFamily="Liberation Sans, sans-serif">1</text>
    <rect x="434" y="322" width="12" height="12" fill="#fff" />
    <text x="436" y="331" fontSize="12" fontWeight="700" fill="#800000" fontFamily="Liberation Sans, sans-serif">3</text>
    <text x="738" y="331" fontSize="12" fontWeight="700" fill="#800000" fontFamily="Liberation Sans, sans-serif">2</text>
    <rect x="363" y="331" width="18" height="15" fill="#fff" />
    <text x="365" y="343" fontSize="13" fontWeight="700" fill="#0000ff" fontFamily="Liberation Sans, sans-serif">S1</text>
    <text x="423" y="411" fontSize="9" fill="#808000" fontFamily="Liberation Sans, sans-serif">28.2</text>
  </Drawing>
);

export default function App() {
  return (
    <Window>
      <Global />
      <TitleBar>
        <svg width="18" height="18" viewBox="0 0 18 18">
          <path d="M5 6 11 1l6 3v7l-8 6z" fill="#6f8fa8" stroke="#3c4f60" strokeWidth=".7" />
          <path d="M6 5l5 3 6-4M11 8v7" stroke="#c5d3de" fill="none" strokeWidth=".8" />
          <text x="2" y="16" fontSize="12" fontWeight="700" fill="#d69b12" fontFamily="Liberation Sans, sans-serif">5</text>
        </svg>
        <TitleText $ml={3}>RFEM 5.20.02 x64 -</TitleText>
        <TitleText $ml={16}>[003601 - model-file2, ZS1*]</TitleText>
      </TitleBar>
      <MenuBar>
        <Grip />
        <MenuLogo>
          <svg width="17" height="13" viewBox="0 0 17 13">
            <rect width="17" height="13" fill="#17365f" />
            <path d="M0 7 8.500 1 17 7" stroke="#fff" fill="none" />
            <path d="M0 7.500h17" stroke="#fff" strokeWidth="1.500" />
            <path d="M5 8v5M12 8v5" stroke="#fff" />
          </svg>
        </MenuLogo>
        {MENU.map(([a, u, b, ml]) => (
          <MenuItem key={a + u + b} $ml={ml}>
            {a}<u>{u}</u>{b}
          </MenuItem>
        ))}
      </MenuBar>
      <ToolRow $h={25}>
        <ToolGroup $w={865}><Items items={ROW1A} start={0} /></ToolGroup>
        <ToolGroup $w={257}><Items items={ROW1B} start={866} /></ToolGroup>
      </ToolRow>
      <ToolRow $h={27}>
        <ToolGroup $w={636}><Items items={ROW2A} start={0} /></ToolGroup>
        <ToolGroup $w={308}><Items items={ROW2B} start={637} /></ToolGroup>
        <ToolGroup $w={177}><Items items={ROW2C} start={946} /></ToolGroup>
      </ToolRow>
      <Main>
        <Rail>
          <NavTab>Navigátor projektu - Výsledky</NavTab>
        </Rail>
        <Canvas>
          <Beam />
          Globální deformace u [mm]
          <br />
          ZS1
          <br />
          Zatížení [kN/m]
        </Canvas>
        <Panel>
          <PanelTitle>Síť KP</PanelTitle>
          <PanelBody>
            <Tabs>
              <TabItem $w={114} $on>Nastavení sítě prvků</TabItem>
              <TabItem $w={113}>Kritéria kvality sítě KP</TabItem>
              <TabItem $w={125}>Adaptivní zahuštění sítě</TabItem>
            </Tabs>
            <TabPage>
              <Group $h={154}>
                <GroupHead>Obecné</GroupHead>
                <GroupBody $pt={6}>
                  <FieldRow $h={27}>
                    <Label>Požadovaná délka konečných<br />prvků</Label>
                    <Symbol>l<Small>FE</Small>:</Symbol>
                    <NumField value="0.500" w={78} next />
                    <Unit>[m]</Unit>
                  </FieldRow>
                  <FieldRow $h={41} $mt={9}>
                    <Label>Maximální vzdálenost mezi uzlem<br />a linií pro integraci do linie</Label>
                    <Symbol>ε:</Symbol>
                    <NumField value="0.001" w={78} next />
                    <Unit>[m]</Unit>
                  </FieldRow>
                  <FieldRow $h={29} $mt={9}>
                    <Label>Maximální počet uzlů sítě KP<br />(v tisících)</Label>
                    <Symbol>max:</Symbol>
                    <NumField value="500" />
                  </FieldRow>
                </GroupBody>
              </Group>
              <Group $h={381}>
                <GroupHead>Pruty</GroupHead>
                <GroupBody $pt={6}>
                  <FieldRow $h={56}>
                    <Label>Počet dělení pro speciální typy prutů<br />(lano, pruty s pružným podložím, s<br />náběhy, nelinearitou):</Label>
                    <span />
                    <NumField value="10" />
                  </FieldRow>
                  <Check on mt={10}>
                    Aktivovat dělení pro přímé pruty, které nejsou integrovány do<br />
                    ploch, ze skupiny materiálové kategorie betonu (nezbytné pro<br />
                    nelineární výpočet)
                  </Check>
                  <FieldRow $h={28} $mt={11}>
                    <Label $pl={17}>Minimální počet<br />dělení prutů:</Label>
                    <span />
                    <NumField value="10" />
                  </FieldRow>
                  <Check on mt={5}>
                    Aktivovat dělení prutů pro analýzu velkých deformací nebo<br />
                    postkritickou analýzu, počáteční přetvoření od jiného ZS / jiné<br />
                    KZ
                  </Check>
                  <Check mt={3}>
                    Dělení použít pro přímé pruty, které nejsou<br />
                    integrovány do ploch
                  </Check>
                  <RadioRow $h={14} $mt={9}>
                    <Radio $on />
                    <RadioText>S požadovanou délkou prvku sítě l<Small>FE</Small></RadioText>
                  </RadioRow>
                  <RadioRow $h={19} $mt={5}>
                    <Radio />
                    <RadioText>Určit délku l<Small>FE</Small> :</RadioText>
                    <NumField value="" w={78} off />
                    <Unit>[m]</Unit>
                  </RadioRow>
                  <FieldRow $h={27} $mt={12} $off>
                    <Label $pl={17}>Minimální počet<br />dělení prutů:</Label>
                    <span />
                    <NumField value="1" off />
                  </FieldRow>
                  <Check on mt={20} flag>Dělit pruty na nich ležícími uzly</Check>
                </GroupBody>
              </Group>
            </TabPage>
            <Buttons>
              <DialogBtn $mr={5}>
                <svg width="20" height="18" viewBox="0 0 20 18">
                  <circle cx="10" cy="8" r="7" fill="#d8e2f2" stroke="#59667c" />
                  <path d="M6 13l-3 4 6-2z" fill="#d8e2f2" stroke="#59667c" strokeWidth=".6" />
                  <text x="6.500" y="12" fontSize="11" fontWeight="700" fill="#1f3f7d" fontFamily="Liberation Sans, sans-serif">?</text>
                </svg>
              </DialogBtn>
              <DialogBtn>
                <svg width="20" height="18" viewBox="0 0 20 18">
                  <rect x="3" y="3" width="12" height="14" fill="#fff" stroke="#444" />
                  <path d="M5 7h8M5 10h8M5 13h8" stroke="#555" />
                  <path d="M8 13 16 2l2 2-8 10-3 1z" fill="#f6d736" stroke="#7a6a14" strokeWidth=".6" />
                </svg>
              </DialogBtn>
              {[0, 1].map(i => (
                <DialogBtn key={i}>
                  <svg width="20" height="18" viewBox="0 0 20 18">
                    <path d="M2 4c0-2 7-2 7 0v10c0 2-7 2-7 0z" fill="#c4c4bc" stroke="#444" />
                    <path d="M9 6h8v11H9z" fill="#fff" stroke="#444" />
                    <path d="M11 9h4M11 11h4M11 13h4" stroke="#555" />
                    <path d={i ? 'M12 1v4M10 3l2-2 2 2' : 'M12 1v4M10 3l2 2 2-2'} stroke="#333" fill="none" />
                  </svg>
                </DialogBtn>
              ))}
              <DialogBtn>
                <svg width="22" height="18" viewBox="0 0 22 18">
                  <rect x="2" y="1" width="18" height="4" fill="#5a9a46" stroke="#2f6a26" strokeWidth=".6" />
                  <text x="2.500" y="14" fontSize="9.500" fontWeight="700" fontStyle="italic" fill="#111" fontFamily="Liberation Serif, serif">0.00</text>
                  <path d="M2 16h18" stroke="#2f4f9a" />
                </svg>
              </DialogBtn>
            </Buttons>
          </PanelBody>
        </Panel>
      </Main>
    </Window>
  );
}
